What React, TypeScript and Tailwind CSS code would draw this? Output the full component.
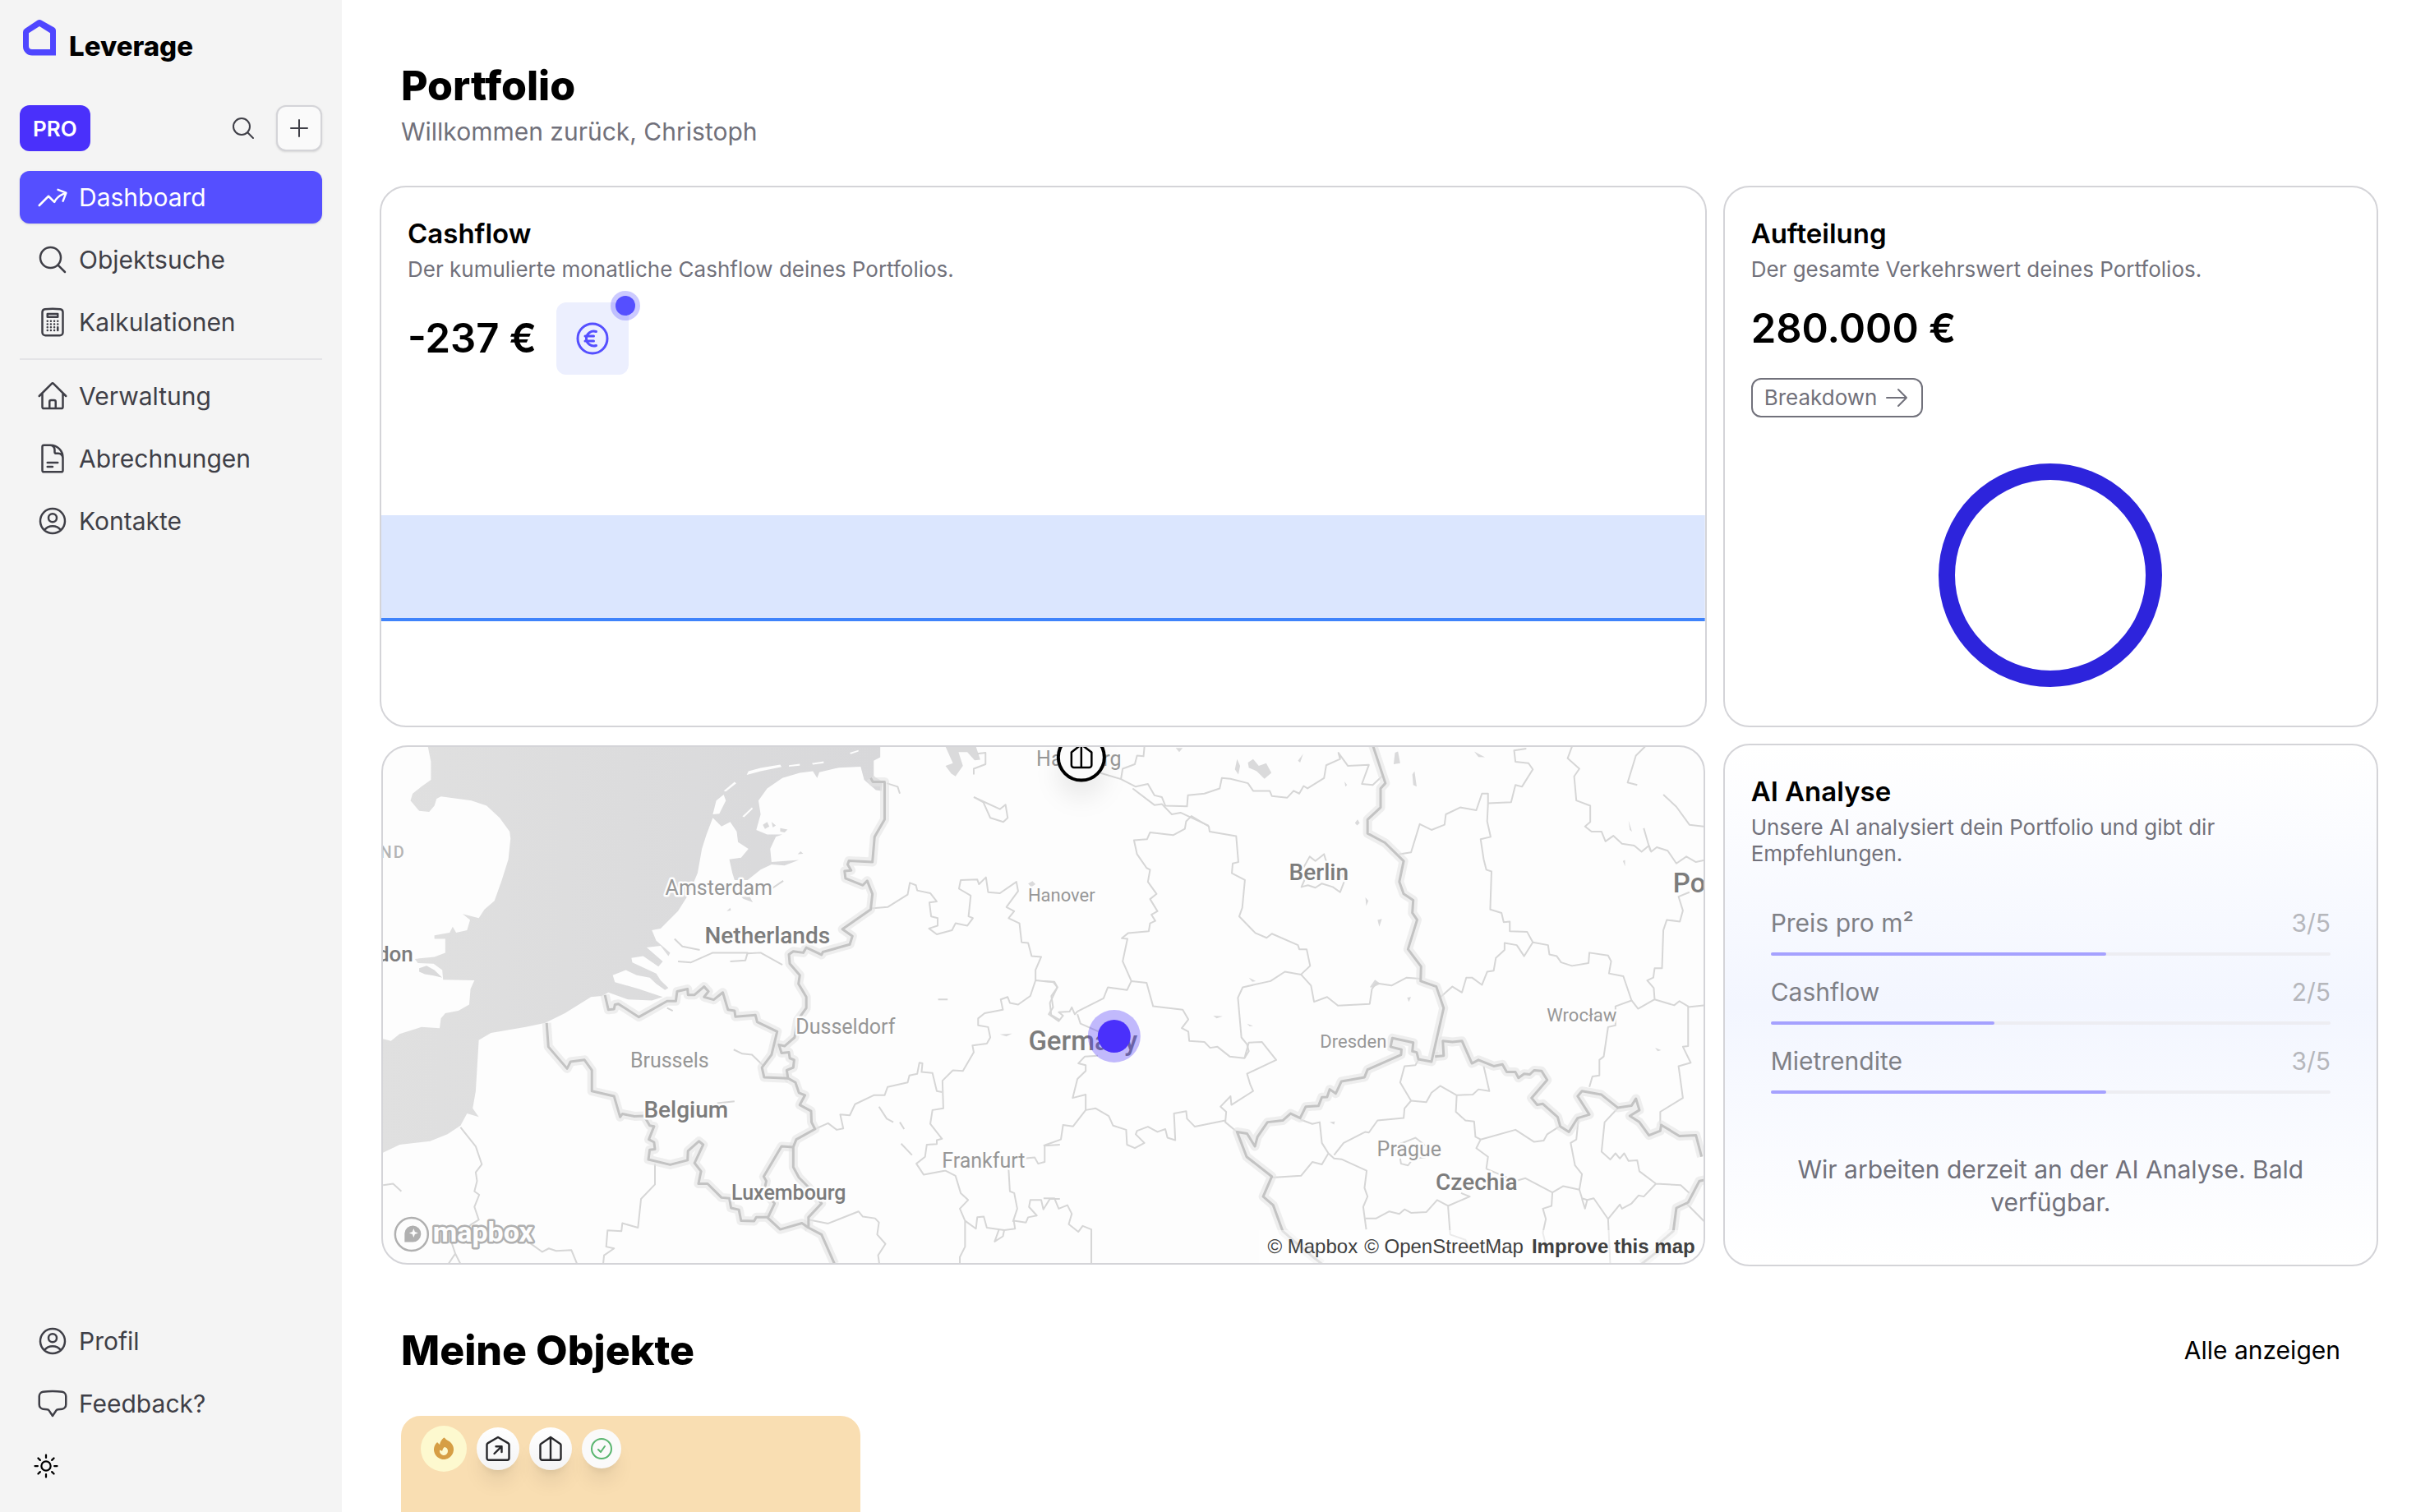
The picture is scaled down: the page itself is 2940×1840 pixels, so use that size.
import type { ReactNode } from 'react';
import type { IconType } from 'react-icons';
import {
  HiFire,
  HiOutlineArrowRight,
  HiOutlineArrowTrendingUp,
  HiOutlineCalculator,
  HiOutlineChatBubbleBottomCenter,
  HiOutlineCheckCircle,
  HiOutlineCurrencyEuro,
  HiOutlineDocumentText,
  HiOutlineHome,
  HiOutlineMagnifyingGlass,
  HiOutlinePlus,
  HiOutlineSun,
  HiOutlineUserCircle,
} from 'react-icons/hi2';

type NavEntry = { label: string; icon: IconType; active?: boolean };

const mainNav: NavEntry[] = [
  { label: 'Dashboard', icon: HiOutlineArrowTrendingUp, active: true },
  { label: 'Objektsuche', icon: HiOutlineMagnifyingGlass },
  { label: 'Kalkulationen', icon: HiOutlineCalculator },
];

const manageNav: NavEntry[] = [
  { label: 'Verwaltung', icon: HiOutlineHome },
  { label: 'Abrechnungen', icon: HiOutlineDocumentText },
  { label: 'Kontakte', icon: HiOutlineUserCircle },
];

const footerNav: NavEntry[] = [
  { label: 'Profil', icon: HiOutlineUserCircle },
  { label: 'Feedback?', icon: HiOutlineChatBubbleBottomCenter },
];

const scores = [
  { label: 'Preis pro m²', value: 3 },
  { label: 'Cashflow', value: 2 },
  { label: 'Mietrendite', value: 3 },
];

function NavItem({ label, icon: Icon, active }: NavEntry) {
  return (
    <a
      href="#"
      className={
        active
          ? 'flex h-16 items-center gap-3 rounded-xl bg-[#554fff] px-5 text-white shadow-sm'
          : 'flex h-16 items-center gap-3 rounded-xl px-5 text-zinc-700'
      }
    >
      <Icon className="size-10" />
      <span className="text-[30px] leading-10">{label}</span>
    </a>
  );
}

function Logo() {
  return (
    <svg width="40" height="44" viewBox="0 0 40 44" fill="#4f46ff">
      <path
        fillRule="evenodd"
        d="M17.5 .8a5 5 0 0 1 5 0L38 9.600a4 4 0 0 1 2 3.500V43.500H11A11 11 0 0 1 0 32.500V15a5 5 0 0 1 2.500-4.300ZM20 8 7 16.200V32a4 4 0 0 0 4 4H33V16.200Z"
      />
    </svg>
  );
}

function Sidebar() {
  return (
    <aside className="flex w-[416px] shrink-0 flex-col bg-[#f4f4f4] p-6">
      <div className="flex items-start gap-4 px-1">
        <Logo />
        <span className="text-[33px] leading-16 font-extrabold text-black">Leverage</span>
      </div>

      <div className="mt-10 flex items-center gap-6">
        <span className="flex h-14 items-center rounded-xl bg-[#4a30fb] px-4 text-[26px] font-semibold text-white">PRO</span>
        <button type="button" aria-label="Suche" className="ml-auto text-zinc-700">
          <HiOutlineMagnifyingGlass className="size-8" />
        </button>
        <button
          type="button"
          aria-label="Neu"
          className="flex size-14 items-center justify-center rounded-xl border-2 border-zinc-300 bg-zinc-50 text-zinc-700 shadow-sm"
        >
          <HiOutlinePlus className="size-8" />
        </button>
      </div>

      <nav className="mt-6 flex flex-1 flex-col gap-3">
        {mainNav.map((entry) => (
          <NavItem key={entry.label} {...entry} />
        ))}
        <hr className="border-t-2 border-zinc-200" />
        {manageNav.map((entry) => (
          <NavItem key={entry.label} {...entry} />
        ))}
      </nav>

      <div className="flex flex-col gap-3">
        {footerNav.map((entry) => (
          <NavItem key={entry.label} {...entry} />
        ))}
        <button type="button" aria-label="Design wechseln" className="flex size-16 items-center justify-center text-black">
          <HiOutlineSun className="size-9" />
        </button>
      </div>
    </aside>
  );
}

function CardHeader({ title, text }: { title: string; text: string }) {
  return (
    <header className="px-8 pt-9">
      <h2 className="text-[33px] leading-10 font-semibold text-black">{title}</h2>
      <p className="mt-2 text-[26px] leading-8 text-zinc-500">{text}</p>
    </header>
  );
}

function CashflowCard() {
  return (
    <section className="col-span-2 overflow-hidden rounded-[32px] border-2 border-zinc-300 bg-white">
      <CardHeader title="Cashflow" text="Der kumulierte monatliche Cashflow deines Portfolios." />
      <div className="mt-6 flex items-center gap-6 px-8">
        <span className="text-[49px] leading-16 font-semibold text-black">-237 €</span>
        <div className="relative flex size-[88px] items-center justify-center rounded-xl bg-[#eceffe] text-[#554fff]">
          <HiOutlineCurrencyEuro className="size-12" />
          <span className="absolute -top-3.5 -right-3.5 flex size-9 items-center justify-center rounded-full bg-[#554fff]/30">
            <span className="size-6 rounded-full bg-[#554fff]" />
          </span>
        </div>
      </div>
      <svg className="mt-12 block h-[379px] w-full" viewBox="0 0 100 379" preserveAspectRatio="none">
        <rect x="0" y="123" width="100" height="126" fill="#dbe6fe" />
        <rect x="0" y="248" width="100" height="4" fill="#3f83fb" />
      </svg>
    </section>
  );
}

function AllocationCard() {
  return (
    <section className="rounded-[32px] border-2 border-zinc-300 bg-white">
      <CardHeader title="Aufteilung" text="Der gesamte Verkehrswert deines Portfolios." />
      <div className="px-8">
        <p className="mt-6 text-[49px] leading-16 font-semibold text-black">280.000 €</p>
        <button
          type="button"
          className="mt-7 flex h-12 items-center gap-2 rounded-xl border-2 border-zinc-500 px-3.5 text-[26px] leading-10 text-zinc-500"
        >
          Breakdown
          <HiOutlineArrowRight className="size-8" />
        </button>
        <svg className="mx-auto mt-14 block size-[272px]" viewBox="0 0 272 272">
          <circle cx="136" cy="136" r="126" fill="none" stroke="#2d24dc" strokeWidth="20" />
        </svg>
      </div>
    </section>
  );
}

function AnalysisCard() {
  return (
    <section className="rounded-[32px] border-2 border-zinc-300 bg-linear-to-b from-white via-[#f3f6ff] to-white pb-14">
      <CardHeader title="AI Analyse" text="Unsere AI analysiert dein Portfolio und gibt dir Empfehlungen." />
      <ul className="mt-12 flex flex-col gap-6 px-14">
        {scores.map((score) => (
          <li key={score.label}>
            <div className="flex justify-between text-[30px] leading-10">
              <span className="text-[#7f8086]">{score.label}</span>
              <span className="text-[#b6b7bc]">{score.value}/5</span>
            </div>
            <div className="mt-4 h-1 rounded-full bg-[#ededf2]">
              <div className="h-1 rounded-full bg-[#a5a1ff]" style={{ width: `${score.value * 20}%` }} />
            </div>
          </li>
        ))}
      </ul>
      <p className="mt-18 px-8 text-center text-[30px] leading-10 text-zinc-500">
        Wir arbeiten derzeit an der AI Analyse. Bald verfügbar.
      </p>
    </section>
  );
}

// ── Map geometry ──────────────────────────────────
// Drawn as two tiles; each tile has its own coordinate space.

const sea =
  'M115 44L122 88V140L100 160 80 180 75 200 95 230 118 233 130 215 135 195 145 188 215 200 250 215 280 250 303 290 305 310 300 370 285 430 268 490 245 515 232 540 195 528 212 545 205 575 180 582 172 565 165 582 130 590V600H155V640L130 652 85 658 92 670 128 672 148 690 150 718 222 720 213 745 210 790 185 808 155 815 145 830 142 858 100 855 50 875 30 895 0 885V1225L50 1195 120 1185 160 1165 190 1140 205 1105 232 1115 218 1090 225 1040 232 893 260 872 340 855 385 843 430 815 490 768 515 765 530 755 575 775 630 778 655 768 600 745 545 725 540 705 570 690 595 705 625 712 640 730 660 748 668 742 650 720 640 700 585 668 583 655 610 650 645 680 655 665 618 625 650 620 668 650 672 640 640 605 630 575 650 570 690 520 715 470 735 410 745 340 755 300 770 250 790 275 810 262 825 290 828 320 852 340 835 365 808 370 815 410 820 430 850 430 880 400 905 385 935 388 968 372 905 378 902 340 915 305 930 298 895 298 870 285 880 240 875 200 895 165 930 135 970 120 1000 115 1010 135 1015 118 1060 105 1110 102 1118 140 1145 170 1158 172 1160 145 1140 130V85L1155 75V44Z';

const islands =
  'M770 240L778 200 795 183 800 200 785 238ZM795 172L820 146 824 150 800 174ZM848 126L852 115 880 106 925 96 928 103 880 115ZM945 98L970 94V99L945 102ZM998 92L1025 87V92L1000 96ZM1085 62L1105 54V58L1087 66ZM838 246L860 220 862 224 842 248Z';

const westWater =
  'M1305 44H1375L1385 82 1372 84 1355 60 1335 60 1345 100 1328 130 1318 122 1305 100 1322 92ZM885 270L895 262 900 275 890 282ZM925 280L942 284 935 292 925 290ZM95 685L112 678 130 690 148 712 128 706 108 702 95 695ZM1495 440L1505 433 1512 442 1502 450ZM905 262L915 272 908 278ZM965 355L972 347 978 354ZM835 478L855 478 862 494 840 484ZM802 520L810 510 812 518ZM1430 876L1458 874 1445 882Z';

const westNations = [
  'M1133 135L1138 146H1165V255L1142 305 1137 378 1083 374 1080 385 1088 402 1073 404 1075 425 1115 445 1125 432 1137 470 1133 515 1068 572 1091 592 1085 616 1023 638 1020 646 985 625 978 640 955 636 945 645 947 672 970 705 967 730 985 768V800L965 835 958 885 935 910 922 906 928 930 945 928 947 945 957 950 955 972 940 980 943 1003 960 1015 968 1045 982 1052 970 1080 996 1098 997 1130 1005 1150 962 1180 955 1202V1260L968 1290 990 1318 1020 1365 990 1405 990 1435 1020 1455 1050 1540',
  'M522 762L530 805 543 803 545 790 553 788 600 826 665 780 685 780 688 752 712 745 713 762 728 762 750 738 760 752 750 768 772 776 793 755 805 805 820 808 822 825 868 820 872 840 918 868 905 935 883 972 888 1000 943 1003',
  'M388 843L392 912 435 975 443 955 475 950 492 980V1040L543 1055 557 1115 562 1106 590 1113 612 1112 625 1140 635 1142 623 1180 635 1188 637 1208 625 1210 622 1238 672 1253 712 1240 713 1213 738 1185 748 1195 728 1248 743 1272 737 1308 758 1308 790 1348 808 1350 812 1378 830 1383 835 1415 865 1416 870 1405 895 1405 925 1440 975 1422 990 1435',
  'M955 1202L928 1200 887 1287 893 1300 888 1330 912 1365 897 1405',
];

const westRegions = [
  'M190 1145L225 1200 239 1252 225 1275 228 1300 222 1330 233 1340 222 1375 232 1412 215 1425 170 1480 178 1510 162 1540M178 1510L190 1540',
  'M637 1250V1310L605 1352 598 1435 562 1422 560 1445 528 1443 525 1490 543 1495 520 1515 518 1540',
  'M350 1480L378 1505 393 1495 410 1502 445 1500 458 1540',
  'M1133 512L1172 508 1218 472 1223 438 1237 445 1240 460 1270 468 1285 492 1268 495 1272 535 1287 540V562L1267 570 1285 587 1320 575 1328 555 1355 562 1368 540 1358 535 1363 475 1336 455 1340 430 1378 428 1382 442 1398 422 1403 465 1430 468 1468 435 1472 462 1445 508 1463 520 1450 540 1475 555 1480 610 1495 612 1503 650 1525 652 1512 690V720',
  'M1512 720L1553 725 1562 740 1545 785 1548 820 1568 835M1512 720L1500 765 1472 790 1453 785 1448 768 1432 775 1437 805 1395 815 1380 830V850L1403 855 1408 885 1400 903 1367 908 1370 928 1345 982 1322 980 1298 1010 1300 1090 1275 1095 1270 1135 1297 1178 1285 1182V1193L1262 1195 1258 1230 1238 1250 1255 1282 1305 1270 1328 1285 1340 1335 1357 1355 1338 1380 1350 1415V1490L1338 1520V1540',
  'M1005 1150L1035 1133 1055 1152 1070 1148 1063 1108 1085 1110 1097 1078 1140 1052 1165 1052 1172 1028 1218 1015 1222 995 1240 990 1245 958 1252 960 1250 985 1275 988 1285 1040 1297 1043',
  'M990 1412L1035 1423 1105 1388 1115 1403 1143 1408 1152 1420 1148 1455 1167 1482 1150 1515 1153 1540',
  'M1350 1415L1375 1438 1378 1405 1393 1403 1400 1435 1440 1442 1437 1460 1418 1475 1428 1440M1440 1442L1465 1438 1462 1415 1490 1420 1495 1405 1515 1400 1497 1375 1500 1355 1525 1355 1530 1382 1545 1352 1568 1352',
  'M1450 1265L1453 1330 1463 1335 1470 1380 1460 1418M1485 1235L1510 1232 1518 1250 1533 1245V1198L1568 1195',
  'M1370 190L1392 205 1408 250 1438 262 1448 250 1443 212 1430 225 1370 190M1370 125V108L1397 95V62L1378 65',
  'M1170 150L1195 160 1200 180M1152 1085L1170 1120 1185 1130M1200 1130L1210 1150M1203 1192L1228 1225M12 1312L35 1308 54 1330M1288 775L1310 775M682 600L700 622 740 632M690 665L720 668 770 640 850 640 845 662 810 665M850 642L880 640 930 675M818 920L838 932 860 935 885 965M780 1075L820 1070M905 455L932 432M665 800L678 808',
];

const eastWater =
  'M445 80L452 100 448 125 440 110ZM470 90L482 80 495 100 512 92 524 120 508 137 490 115 472 105ZM808 62L815 58 820 92 805 95ZM990 58L1015 75 1000 74ZM848 125L853 115 858 160 850 155ZM692 145L698 155 694 160ZM716 265L722 255 727 265 721 272ZM585 85L597 65 590 90ZM740 480L747 490 742 505ZM768 545L778 542 772 565ZM836 770L845 768 840 782ZM658 1130L670 1128 668 1137ZM390 822L412 824 398 830ZM472 712L488 722 480 724ZM750 740L762 718 775 730 758 740ZM304 48H320L312 60ZM1332 375L1337 372V390ZM1406 915L1420 922 1412 925ZM1345 258L1353 290 1348 285ZM468 845L482 852 474 853Z';

const eastNations = [
  'M757 40L786 150 775 165V220L745 255V295L785 322 828 375 818 435 828 470 850 488 848 525 859 545 838 630 868 680 867 722 903 738 920 800 892 955 862 948 858 928 848 925 850 900 802 887 798 912 823 920 822 935 745 978 738 1000 685 1012 672 1047 658 1035 652 1057 640 1058 632 1083 603 1085 590 1118 568 1105 550 1125 515 1130 492 1172 486 1200 468 1163 445 1158 467 1230 525 1287 505 1345 528 1370 550 1445 600 1500 640 1540',
  'M900 940L920 938 918 895 940 898 962 895 985 960 1000 950 1035 968 1055 963 1065 985 1085 985 1092 1002 1105 990 1118 992 1128 980 1145 982 1158 1008 1122 1060 1135 1080 1148 1077 1182 1115 1188 1142 1208 1158 1228 1118 1255 1108 1228 1055 1238 1040 1282 1050 1320 1088 1352 1082 1362 1062 1370 1095 1348 1112 1370 1130 1392 1168 1418 1155 1420 1138 1462 1170 1500 1168 1513 1230',
  'M1520 1297L1508 1300 1482 1362 1455 1378 1448 1445 1420 1475 1415 1500 1375 1540',
];

const eastRegions = [
  'M0 722L25 724 32 740 18 765 22 798 12 818 35 838 45 822 35 812 60 810 65 798 72 818 78 810 138 772 148 740 192 748 202 722 237 727 252 795 320 805 333 833 318 858 333 868 335 895 370 898 383 915 400 912 428 940 462 945 472 925 468 905 455 885 447 770 458 740 522 722 555 695 592 703 615 735 622 782 652 768 677 793 750 788 755 745 765 728 800 735 835 712 865 715',
  'M202 722L182 665 193 600 180 598 195 583 242 578 245 555 257 548 248 530 262 520 245 485 260 470 240 435 245 400 237 395 215 355 208 315 238 312 245 292 298 300 325 282 328 260 340 245 380 275 382 290 443 303 448 378 435 382 433 410 463 430 457 510 450 535 487 583 513 597 525 585 585 618 588 630 605 630 613 678 592 703',
  'M130 120L178 138 212 160 240 152 255 185 272 190 280 215 330 217 332 185 370 180 405 165 410 135 430 137 470 150 482 172 520 172 525 187 560 192 575 172 588 180 598 158 607 165 645 135 650 98 682 80 678 62 700 100 748 97 732 152 757 155 778 130M178 138L182 108 210 95 215 70 230 72 232 44',
  'M205 165L255 213 272 210 295 240 315 235 380 273',
  'M818 355L845 350 865 268 892 285 922 270 925 240 958 220 995 228 1008 180 1022 180V208L1075 205 1085 155 1100 160 1125 110 1115 92 1085 88 1082 55 1110 50M1022 208L1020 260 1028 305 1005 312 1012 370 1018 400 1030 405 1027 515 1053 525 1058 552 1072 550V578L1112 580 1125 610 1105 650 1088 618 1060 612V632L1040 655 1035 692 1020 695 1008 733 985 712H972L962 755 940 738 913 768',
  'M1125 610L1160 618 1163 645 1180 650 1190 668 1215 678 1253 670 1255 640 1298 648 1305 665 1300 700 1333 708 1352 778 1315 795V850L1298 855 1288 940 1278 950V995L1262 998 1255 1028',
  'M1352 778L1367 802 1405 775 1403 742 1388 720 1402 712 1405 685 1422 685 1425 575 1433 545 1463 550 1470 518 1460 478 1485 465M1405 775L1450 792 1462 780 1482 795V910L1470 912 1488 958 1460 968 1470 1060 1418 1100V1138M1482 797L1518 792',
  'M1215 44L1205 78 1232 108 1220 130 1225 200 1257 215V262L1245 275 1260 290 1283 290 1292 318 1310 302 1330 325 1358 330 1375 348 1392 330 1397 348 1410 335 1435 345 1455 382 1478 362 1500 378 1518 373M1383 44L1362 70 1343 148 1365 155M1425 183L1455 218 1485 270 1518 275M1380 280L1395 345',
  'M462 945L472 900 502 898 535 950 468 990 475 1020 482 1040 432 1080 430 1055 407 1085 420 1100 418 1130 445 1158M418 1125L348 1143 330 1120 328 1098 300 1105 303 1182 285 1175 280 1150 262 1158 240 1143 215 1155 212 1165 232 1190 210 1205 192 1195 190 1152 160 1140 150 1112 120 1090 97 1095 68 1142 45 1138 40 1180 0 1198',
  'M125 938L95 940 80 960 97 965V982L78 1005 67 1060 97 1050V1095M78 818L85 845 130 870',
  'M0 1350L25 1350 35 1380 55 1370 65 1395 58 1425 80 1447 90 1430 110 1440V1540',
  'M590 1122L618 1135 635 1130 640 1190 655 1220 640 1252 618 1245 592 1285 525 1290M668 1225L690 1190 740 1158 748 1160 768 1125 828 1118 830 1090 845 1068 820 1015 830 968 855 965 862 950M655 1220L668 1235 685 1237 743 1270 738 1320 745 1345 735 1375 742 1440',
  'M845 1068L880 1072 892 1045 912 1025 950 1052 987 1050 1000 1035 1025 1040 1012 968M950 1052L948 1100 970 1125 990 1128 993 1172 1005 1180 995 1205 1022 1230 1018 1265M1005 1180L1085 1152 1128 1187 1150 1183 1158 1165 1185 1143',
  'M740 1408L765 1408 795 1388 818 1395 830 1382 845 1392 880 1390 905 1355 930 1372 980 1345 960 1335M930 1372L935 1455 970 1470 980 1500M1018 1265L1085 1300 1108 1292 1170 1333 1195 1315 1232 1325 1238 1350 1250 1355 1245 1380 1238 1352M1170 1333L1168 1372 1148 1380 1155 1410 1148 1450 1158 1500',
  'M1230 1118L1225 1180 1212 1190 1222 1255 1238 1280 1232 1325M1320 1090L1290 1130 1283 1215 1303 1238 1315 1220 1325 1235 1335 1220 1345 1242 1365 1240 1370 1272 1408 1308 1380 1345 1368 1342 1352 1365 1330 1380 1325 1368 1298 1410 1265 1350 1250 1355M1298 1410L1303 1540M1408 1308L1465 1312 1485 1335M1478 1365L1520 1418',
  'M593 450L600 430 595 400 612 362 625 375 645 355 652 385 680 395 692 432 682 465 665 450 640 440 625 452 608 445ZM808 1220L815 1195 855 1175 880 1200M820 1235L822 1250 838 1255 850 1235 878 1232',
];

type MapLabel = { text: string; x: number; y: number };

const cities: MapLabel[] = [
  { text: 'Amsterdam', x: 409, y: 171 },
  { text: 'Dusseldorf', x: 563, y: 340 },
  { text: 'Brussels', x: 349, y: 381 },
  { text: 'Frankfurt', x: 731, y: 503 },
  { text: 'Hamburg', x: 847, y: 14 },
  { text: 'Prague', x: 1249, y: 489 },
];

const smallCities: MapLabel[] = [
  { text: 'Hanover', x: 826, y: 180 },
  { text: 'Dresden', x: 1181, y: 358 },
  { text: 'Wrocław', x: 1459, y: 326 },
];

const countries: MapLabel[] = [
  { text: 'Netherlands', x: 468, y: 229 },
  { text: 'Belgium', x: 369, y: 441 },
  { text: 'Berlin', x: 1139, y: 152 },
  { text: 'Czechia', x: 1331, y: 529 },
];

function MapTile({ transform, nations, regions, children }: {
  transform: string;
  nations: string[];
  regions: string[];
  children: ReactNode;
}) {
  return (
    <g transform={transform} fill="none" strokeLinejoin="round">
      {children}
      {regions.map((d) => (
        <path key={d} d={d} stroke="#d6d6d6" strokeWidth="2" vectorEffect="non-scaling-stroke" />
      ))}
      {nations.map((d) => (
        <path key={d} d={d} stroke="#e4e4e4" strokeOpacity=".6" strokeWidth="11" vectorEffect="non-scaling-stroke" />
      ))}
      {nations.map((d) => (
        <path key={d} d={d} stroke="#c3c3c3" strokeWidth="3" vectorEffect="non-scaling-stroke" />
      ))}
    </g>
  );
}

function Labels({ items, className }: { items: MapLabel[]; className: string }) {
  return (
    <g className={className} textAnchor="middle">
      {items.map(({ text, x, y }) => (
        <text key={text} x={x} y={y} dominantBaseline="central">{text}</text>
      ))}
    </g>
  );
}

function MapCard() {
  return (
    <section className="relative col-span-2 m-0.5 overflow-hidden rounded-[32px] border-2 border-zinc-300 bg-[#fdfdfd]">
      <svg
        className="block h-[628px] w-full font-['Roboto',sans-serif]"
        viewBox="0 0 1607 628"
        preserveAspectRatio="xMidYMid slice"
      >
        <defs>
          <linearGradient id="sea" x1="0" y1="0" x2="1" y2="0">
            <stop offset="0" stopColor="#e0e0e0" />
            <stop offset="1" stopColor="#d8d8da" />
          </linearGradient>
          <filter id="pin-shadow" x="-100%" y="-100%" width="300%" height="300%">
            <feDropShadow dx="0" dy="20" stdDeviation="14" floodOpacity="0.07" />
          </filter>
        </defs>

        <MapTile transform="translate(-6 -19) scale(.5293 .4209)" nations={westNations} regions={westRegions}>
          <path d={sea} fill="url(#sea)" />
          <path d={islands} fill="#fdfdfd" />
          <path d={westWater} fill="#dadadb" />
        </MapTile>
        <MapTile transform="translate(804 -19) scale(.5293 .4209)" nations={eastNations} regions={eastRegions}>
          <path d={eastWater} fill="#dadadb" />
        </MapTile>

        <g stroke="#fdfdfd" strokeWidth="5" strokeLinejoin="round" paintOrder="stroke">
          <Labels items={cities} className="fill-[#979797] text-[25px]" />
          <Labels items={smallCities} className="fill-[#979797] text-[22px]" />
          <Labels items={countries} className="fill-[#7c7c7c] text-[28px] font-medium" />
          <g className="fill-[#7c7c7c] font-medium" dominantBaseline="central">
            <text x="494" y="542" className="text-[25px]" textAnchor="middle">Luxembourg</text>
            <text x="852" y="357" className="text-[33px]" textAnchor="middle">Germany</text>
            <text x="1570" y="165" className="text-[33px]">Poland</text>
            <text x="37" y="252" className="text-[26px]" textAnchor="end">London</text>
            <text x="28" y="128" className="fill-[#b4b4b4] text-xl tracking-widest" textAnchor="end">ENGLAND</text>
          </g>
        </g>

        {/* portfolio location */}
        <circle cx="890" cy="352" r="32" fill="#4a30fb" fillOpacity=".33" />
        <circle cx="890" cy="352" r="20" fill="#4a30fb" />

        {/* property pin */}
        <circle cx="850" cy="12.500" r="28" fill="#fcfcfc" stroke="#000" strokeWidth="4" filter="url(#pin-shadow)" />
        <path
          d="M850 -3V25M838 6.500L850 -3L862.500 6.500V22A3 3 0 0 1 859.500 25H841A3 3 0 0 1 838 22Z"
          fill="none"
          stroke="#000"
          strokeWidth="2.500"
          strokeLinejoin="round"
        />

        {/* mapbox wordmark */}
        <g stroke="#b0b0b0">
          <circle cx="35" cy="593" r="20" fill="#fdfdfd" strokeWidth="2.500" />
          <path d="M26.500 602.500V592A10 10 0 1 1 36 602.500Z" fill="#b0b0b0" stroke="none" />
          <path d="M37.500 586L39 590 43 591.500 39 593 37.500 597 36 593 32 591.500 36 590Z" fill="#fdfdfd" stroke="none" />
          <text x="61" y="602" className="fill-[#fdfdfd] text-[34px] font-bold" strokeWidth="5" strokeLinejoin="round" paintOrder="stroke">mapbox</text>
        </g>
      </svg>

      <div className="absolute right-0 bottom-0 flex h-10 items-center bg-white/50 px-2.5 font-['Liberation_Sans',sans-serif] text-2xl text-[#404040]">
        <a href="#">© Mapbox</a>
        <a href="#" className="ml-2">© OpenStreetMap</a>
        <a href="#" className="ml-2.5 font-bold">Improve this map</a>
      </div>
    </section>
  );
}

function Badge({ children }: { children: ReactNode }) {
  return (
    <span className="flex size-13 items-center justify-center rounded-full bg-linear-to-b from-white to-zinc-100 shadow-xl shadow-black/8">
      <svg width="32" height="32" viewBox="0 0 32 32" fill="none" stroke="#27272a" strokeWidth="2.400" strokeLinecap="round" strokeLinejoin="round">
        {children}
      </svg>
    </span>
  );
}

function ObjectCard() {
  return (
    <article className="h-80 rounded-3xl bg-[#f9deb2] px-6 pt-3">
      <div className="flex items-center gap-3">
        <span className="flex size-14 items-center justify-center rounded-full bg-[#fdf9cf] text-[#d69e45]">
          <HiFire className="size-8" />
        </span>
        <Badge>
          <path d="M2.500 11A2 2 0 0 1 3.400 9.400L16 2 28.600 9.400A2 2 0 0 1 29.500 11V27.500A2.200 2.200 0 0 1 27.300 29.700H4.700A2.200 2.200 0 0 1 2.500 27.500Z" />
          <path d="M11.500 22 20.500 13.200M13.500 13.200H20.500V20" />
        </Badge>
        <Badge>
          <path d="M3.500 11.500A2 2 0 0 1 4.400 9.900L16 2 27.600 9.900A2 2 0 0 1 28.500 11.500V27.500A2.200 2.200 0 0 1 26.300 29.700H5.700A2.200 2.200 0 0 1 3.500 27.500ZM16 2V29.700" />
        </Badge>
        <span className="flex size-12 items-center justify-center rounded-full bg-zinc-50 text-[#59b56f] shadow-xl shadow-black/8">
          <HiOutlineCheckCircle className="size-8" />
        </span>
      </div>
    </article>
  );
}

export default function App() {
  return (
    <div className="flex h-screen overflow-hidden bg-white font-['Inter',sans-serif]">
      <Sidebar />
      <main className="min-w-0 flex-1 overflow-hidden px-[46px] pt-18">
        <header className="px-[26px]">
          <h1 className="text-[50px] leading-16 font-extrabold text-black">Portfolio</h1>
          <p className="mt-1 text-[30px] leading-10 text-zinc-500">Willkommen zurück, Christoph</p>
        </header>

        <div className="mt-[46px] grid grid-cols-3 gap-5">
          <CashflowCard />
          <AllocationCard />
          <MapCard />
          <AnalysisCard />
        </div>

        <section className="mt-[70px] px-[26px]">
          <div className="flex items-center justify-between">
            <h2 className="text-[50px] leading-16 font-extrabold text-black">Meine Objekte</h2>
            <button type="button" className="px-5 text-[30px] leading-10 text-black">
              Alle anzeigen
            </button>
          </div>
          <div className="mt-12 grid grid-cols-4 gap-12">
            <ObjectCard />
          </div>
        </section>
      </main>
    </div>
  );
}
